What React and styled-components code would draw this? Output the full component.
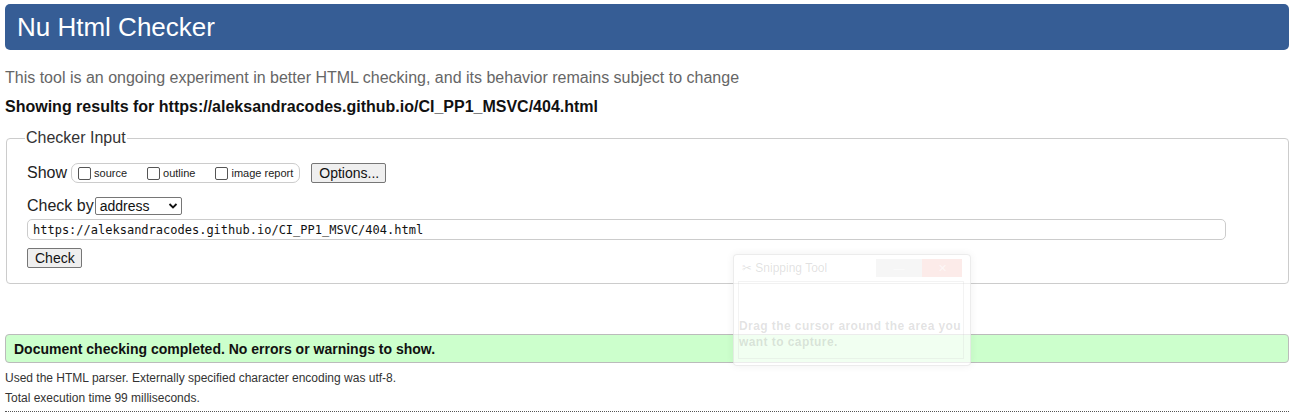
import React from "react";
import styled, { createGlobalStyle } from "styled-components";

const GlobalStyle = createGlobalStyle`
	html, body {
		margin: 0;
		padding: 0;
		background: #ffffff;
	}
	body {
		font-family: "Liberation Sans", Arial, sans-serif;
		color: #000000;
	}
`;

const Page = styled.div`
	position: relative;
	padding: 4px 5px 0 5px;
	min-height: 413px;
`;
const Header = styled.h1`
	margin: 0;
	height: 46px;
	display: flex;
	align-items: center;
	padding: 0 12px;
	border-radius: 5px;
	background: #365d95;
	color: #ffffff;
	font-size: 26px;
	font-weight: 400;
`;
const Intro = styled.p`
	margin: 18px 0 0 0;
	font-size: 16px;
	line-height: 19px;
	color: #666666;
`;
const Results = styled.h2`
	margin: 10px 0 0 0;
	font-size: 16px;
	line-height: 19px;
	font-weight: 700;
	color: #111111;
`;
const Fieldset = styled.fieldset`
	margin: 13px 0 0 1px;
	padding: 16px 20px 15px 20px;
	border: 1px solid #cccccc;
	border-radius: 4px;
`;
const Legend = styled.legend`
	margin-left: -2px;
	padding: 0 1px;
	font-size: 16px;
	color: #333333;
`;
const Row = styled.div`
	display: flex;
	align-items: center;
	margin-top: ${(p) => p.$top || 0}px;
	height: ${(p) => p.$height || "auto"};
`;
const Label = styled.span`
	font-size: 16px;
	color: #222222;
`;
const ChoiceGroup = styled.div`
	display: flex;
	align-items: center;
	gap: 20px;
	height: 18px;
	margin-left: 4px;
	padding: 0 6px 0 6px;
	border: 1px solid #cccccc;
	border-radius: 7px;
`;
const Choice = styled.label`
	display: flex;
	align-items: center;
	font-size: 11px;
	color: #222222;
`;
const Box = styled.span`
	width: 11px;
	height: 11px;
	margin-right: 3px;
	border: 1px solid #555555;
	border-radius: 2px;
	background: #ffffff;
`;
const Button = styled.button`
	height: 20px;
	padding: 0 6px 0 7px;
	font-family: "Liberation Sans", Arial, sans-serif;
	font-size: 14px;
	color: #111111;
	background: #efefef;
	border: 1px solid #767676;
	border-radius: 2px;
	margin-left: ${(p) => p.$left || 0}px;
`;
const Select = styled.div`
	display: flex;
	align-items: center;
	justify-content: space-between;
	width: 87px;
	height: 18px;
	margin-left: 1px;
	padding: 0 3px 0 4px;
	box-sizing: border-box;
	border: 1px solid #767676;
	border-radius: 2px;
	font-size: 14px;
	color: #111111;
`;
const UrlInput = styled.div`
	margin-top: 3px;
	width: 1199px;
	height: 21px;
	box-sizing: border-box;
	display: flex;
	align-items: center;
	padding: 0 5px;
	border: 1px solid #cccccc;
	border-radius: 5px;
	font-family: "DejaVu Sans Mono", "Liberation Mono", monospace;
	font-size: 12px;
	color: #111111;
`;
const Success = styled.div`
	margin-top: 50px;
	height: 29px;
	box-sizing: border-box;
	display: flex;
	align-items: center;
	padding: 0 8px;
	background: #ccffcc;
	border: 1px solid #bbbbbb;
	border-radius: 4px;
	font-size: 14px;
	font-weight: 700;
	color: #111111;
`;
const Note = styled.p`
	margin: ${(p) => p.$top || 0}px 0 0 0;
	font-size: 12px;
	line-height: 14px;
	color: #333333;
`;
const Rule = styled.hr`
	margin: 6px 0 0 0;
	border: 0;
	border-top: 1px dotted #555555;
`;

/* the faint snipping tool window lying over the page */
const Snip = styled.div`
	position: absolute;
	left: 733px;
	top: 254px;
	width: 238px;
	height: 112px;
	box-sizing: border-box;
	border: 1px solid rgba(200, 200, 200, 0.35);
	border-radius: 4px;
	background: rgba(255, 255, 255, 0.72);
	box-shadow: 0 0 8px rgba(0, 0, 0, 0.06);
	display: flex;
	flex-direction: column;
`;
const SnipBar = styled.div`
	height: 26px;
	display: flex;
	align-items: center;
	padding-left: 8px;
	font-size: 12px;
	color: rgba(120, 120, 120, 0.22);
`;
const SnipButtons = styled.div`
	margin-left: auto;
	display: flex;
	height: 18px;
	margin-right: 8px;
`;
const SnipBtn = styled.span`
	width: ${(p) => p.$w}px;
	background: ${(p) => p.$bg};
	display: flex;
	align-items: center;
	justify-content: center;
	color: rgba(255, 255, 255, 0.6);
	font-size: 11px;
`;
const SnipBody = styled.div`
	flex: 1;
	margin: 0 6px 6px 4px;
	border: 1px solid rgba(200, 200, 200, 0.22);
	padding: 36px 0 0 0;
	font-size: 12px;
	font-weight: 700;
	letter-spacing: 0.42px;
	line-height: 16px;
	color: rgba(110, 110, 110, 0.2);
	white-space: nowrap;
`;

const Chevron = () => (
	<svg width="10" height="8" viewBox="0 0 10 8">
		<path d="M1.5 2 L5 5.5 L8.5 2" fill="none" stroke="#111" strokeWidth="1.8" />
	</svg>
);

const App = () => {
	return (
		<Page>
			<GlobalStyle />
			<Header>Nu Html Checker</Header>
			<Intro>
				This tool is an ongoing experiment in better HTML checking, and its behavior remains subject to change
			</Intro>
			<Results>Showing results for https://aleksandracodes.github.io/CI_PP1_MSVC/404.html</Results>
			<Fieldset>
				<Legend>Checker Input</Legend>
				<Row $height="20px">
					<Label>Show</Label>
					<ChoiceGroup>
						<Choice>
							<Box />
							source
						</Choice>
						<Choice>
							<Box />
							outline
						</Choice>
						<Choice>
							<Box />
							image report
						</Choice>
					</ChoiceGroup>
					<Button $left={11}>Options...</Button>
				</Row>
				<Row $top={13} $height="20px">
					<Label>Check by</Label>
					<Select>
						address
						<Chevron />
					</Select>
				</Row>
				<UrlInput>https://aleksandracodes.github.io/CI_PP1_MSVC/404.html</UrlInput>
				<Row $top={8}>
					<Button>Check</Button>
				</Row>
			</Fieldset>
			<Success>Document checking completed. No errors or warnings to show.</Success>
			<Note $top={8}>Used the HTML parser. Externally specified character encoding was utf-8.</Note>
			<Note $top={6}>Total execution time 99 milliseconds.</Note>
			<Rule />
			<Snip>
				<SnipBar>
					✂ Snipping Tool
					<SnipButtons>
						<SnipBtn $w={46} $bg="rgba(220, 220, 220, 0.25)">—</SnipBtn>
						<SnipBtn $w={40} $bg="rgba(232, 90, 70, 0.12)">✕</SnipBtn>
					</SnipButtons>
				</SnipBar>
				<SnipBody>
					Drag the cursor around the area you
					<br />
					want to capture.
				</SnipBody>
			</Snip>
		</Page>
	);
};

export default App;
